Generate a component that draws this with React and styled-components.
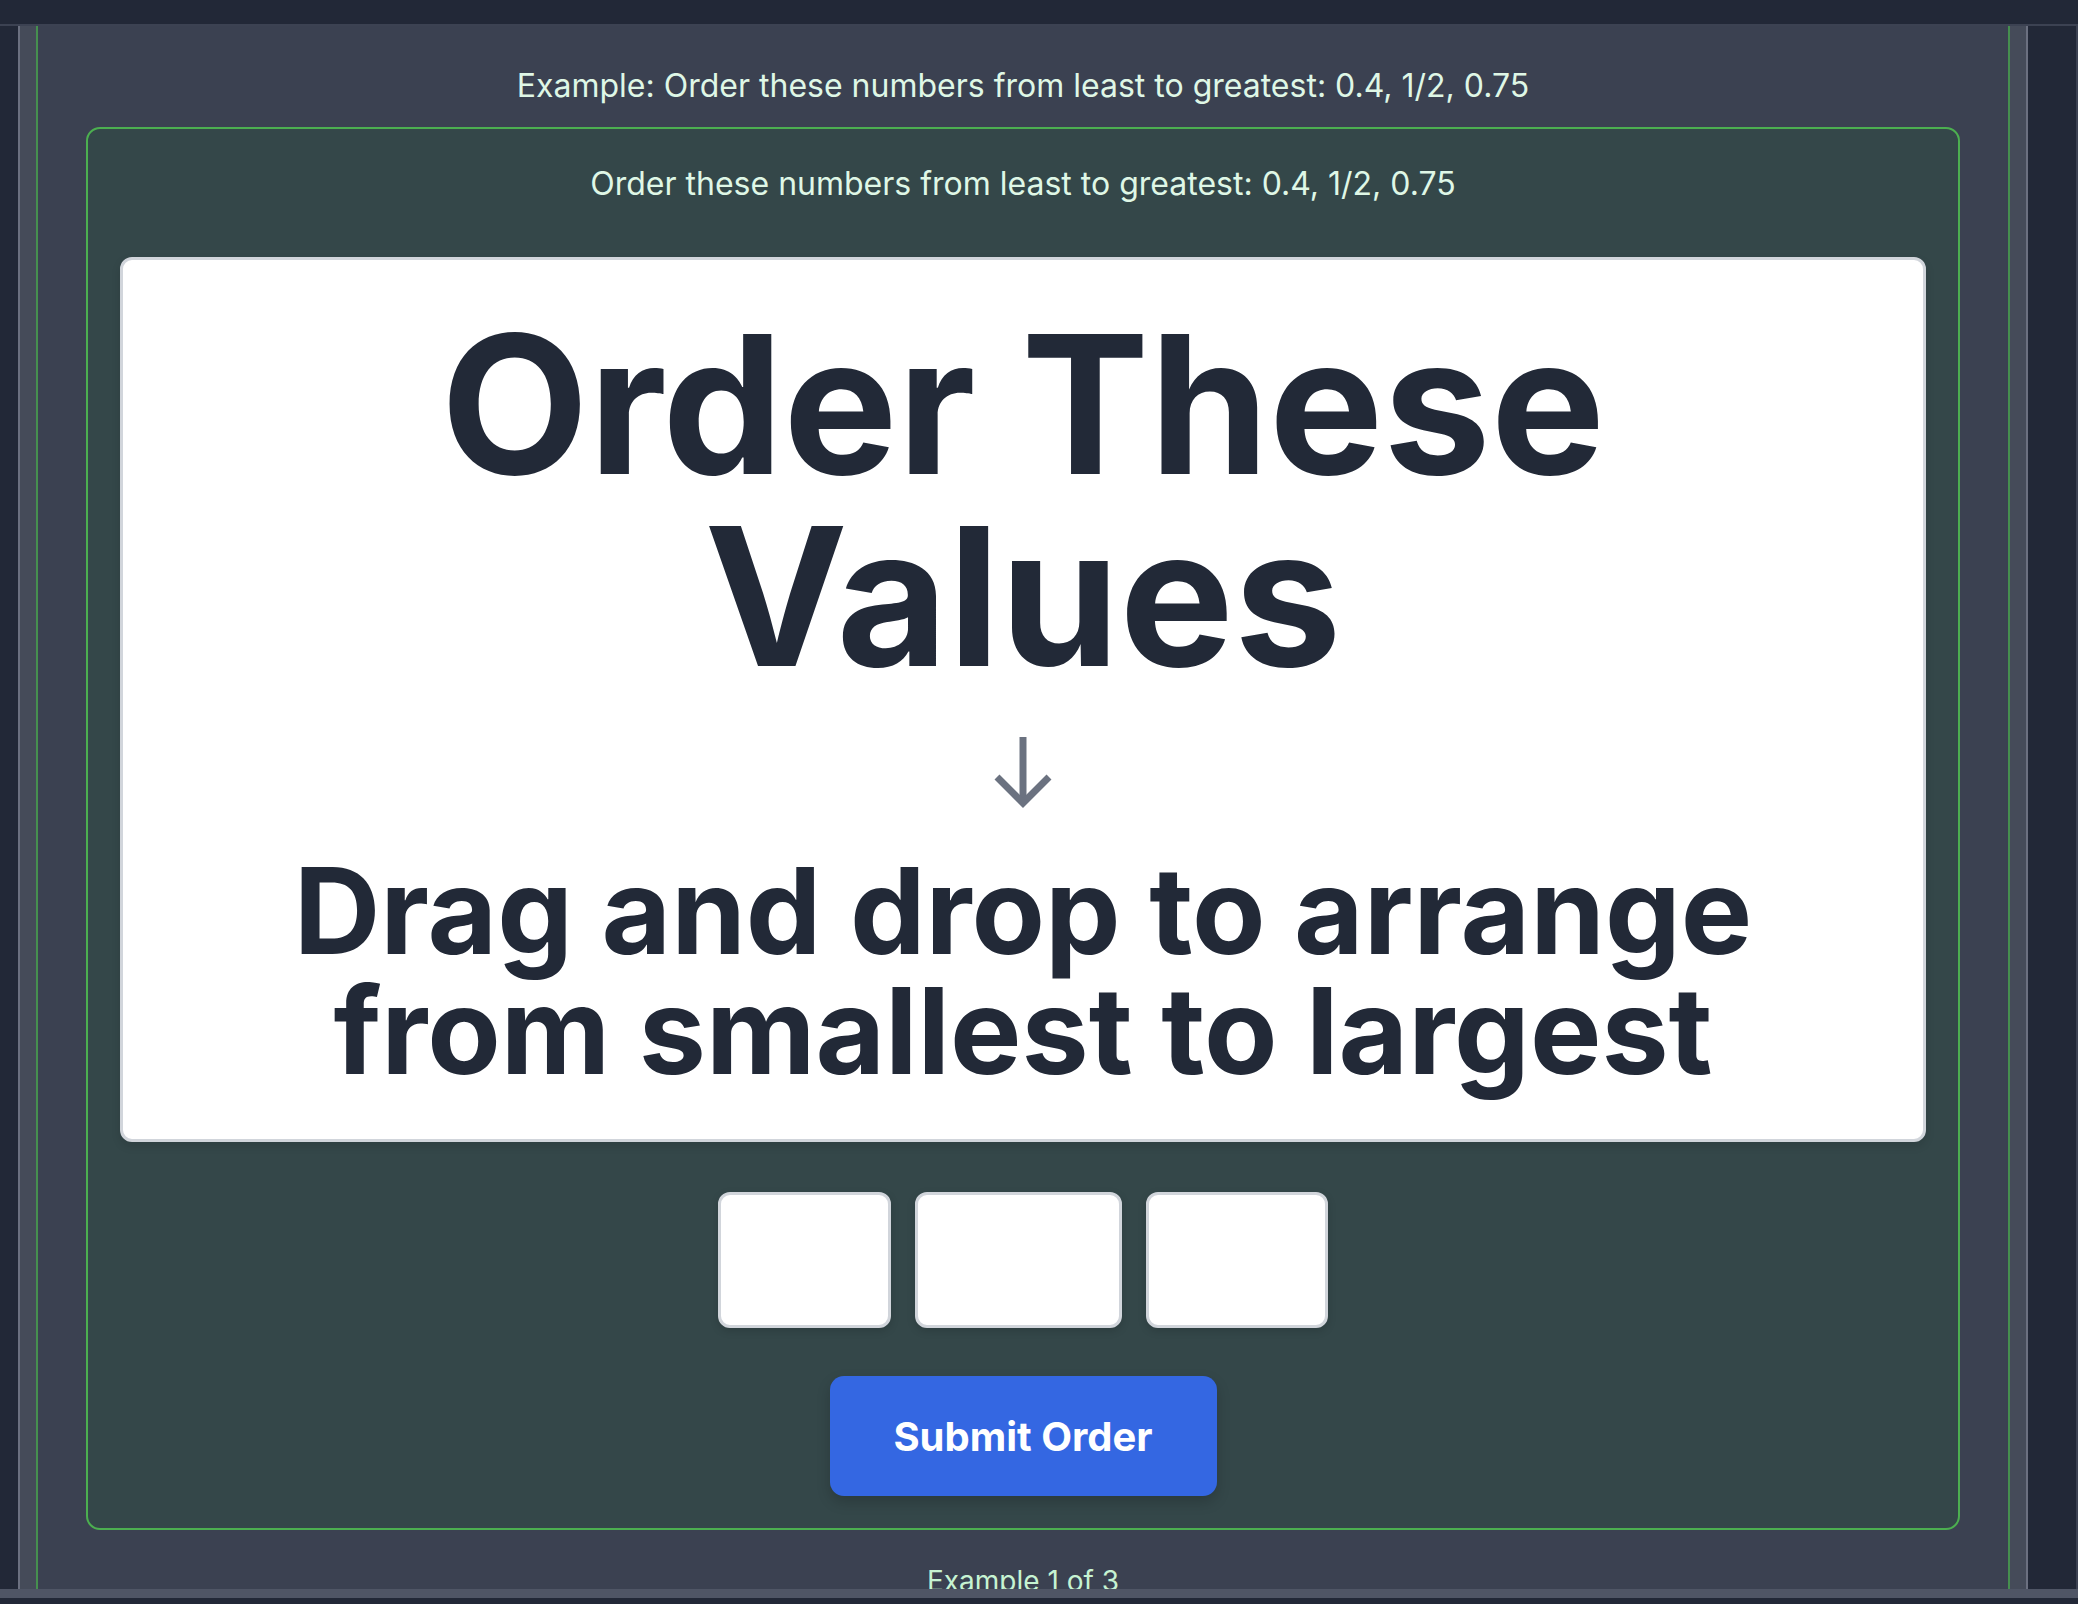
import React from 'react'
import styled, { createGlobalStyle } from 'styled-components'

const GlobalStyle = createGlobalStyle`
    html, body {
        margin: 0;
        padding: 0;
        background: #222837;
        height: 1604px;
        overflow: hidden;
    }
    #root {
        height: 100%;
    }
    * {
        box-sizing: border-box;
    }
`

const slotWidths = [173, 207, 182]

const App = () => {
    return (
        <>
            <GlobalStyle />
            <Shell>
                <TopBar />
                <Middle>
                    <LeftRail />
                    <Strip />
                    <Panel>
                        <ExampleLabel>Example: Order these numbers from least to greatest: 0.4, 1/2, 0.75</ExampleLabel>
                        <Card>
                            <Prompt>Order these numbers from least to greatest: 0.4, 1/2, 0.75</Prompt>
                            <Sheet>
                                <BigTitle>Order These Values</BigTitle>
                                <ArrowBox>
                                    <svg width="80" height="111" viewBox="0 0 80 111">
                                        <path d="M40 21V86" stroke="#6b7280" strokeWidth="7" fill="none" />
                                        <path d="M14 61L40 87L66 61" stroke="#6b7280" strokeWidth="7" fill="none" strokeLinejoin="miter" />
                                    </svg>
                                </ArrowBox>
                                <SubTitle>Drag and drop to arrange from smallest to largest</SubTitle>
                            </Sheet>
                            <Slots>
                                {slotWidths.map((w, i) => (
                                    <Slot key={i} $w={w} />
                                ))}
                            </Slots>
                            <SubmitButton>Submit Order</SubmitButton>
                        </Card>
                        <Counter>Example 1 of 3</Counter>
                    </Panel>
                    <Strip />
                    <RightRail />
                </Middle>
                <BottomBar />
            </Shell>
        </>
    )
}

export default App

const Shell = styled.div`
    height: 1604px;
    display: flex;
    flex-direction: column;
    font-family: Inter, "Liberation Sans", sans-serif;
`
const TopBar = styled.div`
    height: 26px;
    flex-shrink: 0;
    background: #222837;
    border-bottom: 2px solid #3c4252;
`
const Middle = styled.div`
    flex: 1;
    display: flex;
    overflow: hidden;
`
const LeftRail = styled.div`
    width: 20px;
    flex-shrink: 0;
    background: #222837;
    border-right: 2px solid #6b7080;
`
const RightRail = styled.div`
    width: 52px;
    flex-shrink: 0;
    background: #222837;
    border-left: 2px solid #6b7080;
    border-right: 2px solid #3c4252;
`
const Strip = styled.div`
    width: 16px;
    flex-shrink: 0;
    background: #454b59;
`
const Panel = styled.div`
    flex: 1;
    background: #3b4151;
    border-left: 2px solid #468f4f;
    border-right: 2px solid #468f4f;
    padding: 36px 48px 0;
    display: flex;
    flex-direction: column;
    align-items: stretch;
`
const ExampleLabel = styled.div`
    font-size: 32px;
    line-height: 48px;
    color: #dff7e6;
    text-align: center;
    margin-bottom: 17px;
`
const Card = styled.div`
    border: 2px solid #4caf50;
    border-radius: 14px;
    background: #344749;
    padding: 31px 32px 32px;
    display: flex;
    flex-direction: column;
    align-items: center;
`
const Prompt = styled.div`
    font-size: 32px;
    line-height: 48px;
    color: #dff7e6;
    text-align: center;
    margin-bottom: 49px;
`
const Sheet = styled.div`
    width: 100%;
    background: #ffffff;
    border: 3px solid #d1d5db;
    border-radius: 12px;
    padding: 48px 32px;
    display: flex;
    flex-direction: column;
    align-items: center;
    box-shadow: 0 4px 10px rgba(0, 0, 0, 0.12);
`
const BigTitle = styled.h1`
    margin: 0;
    font-size: 192px;
    line-height: 1;
    font-weight: 700;
    color: #222937;
    text-align: center;
`
const ArrowBox = styled.div`
    margin: 24px 0;
    height: 111px;
    display: flex;
    justify-content: center;
`
const SubTitle = styled.h2`
    margin: 0;
    max-width: 1560px;
    font-size: 120px;
    line-height: 1;
    font-weight: 700;
    color: #222937;
    text-align: center;
`
const Slots = styled.div`
    margin-top: 50px;
    display: flex;
    gap: 24px;
`
const Slot = styled.div`
    width: ${p => p.$w}px;
    height: 136px;
    background: #ffffff;
    border: 3px solid #d1d5db;
    border-radius: 12px;
    box-shadow: 0 3px 8px rgba(0, 0, 0, 0.15);
`
const SubmitButton = styled.button`
    margin-top: 48px;
    width: 387px;
    height: 120px;
    border: none;
    border-radius: 14px;
    background: #3467e2;
    color: #ffffff;
    font-family: Inter, "Liberation Sans", sans-serif;
    font-size: 40px;
    font-weight: 700;
    box-shadow: 0 6px 14px rgba(0, 0, 0, 0.18);
    cursor: pointer;
`
const Counter = styled.div`
    margin-top: 31px;
    font-size: 28px;
    line-height: 40px;
    color: #c6f3d2;
    text-align: center;
`
const BottomBar = styled.div`
    height: 15px;
    flex-shrink: 0;
    background: #222837;
    border-top: 9px solid #4f5565;
`
